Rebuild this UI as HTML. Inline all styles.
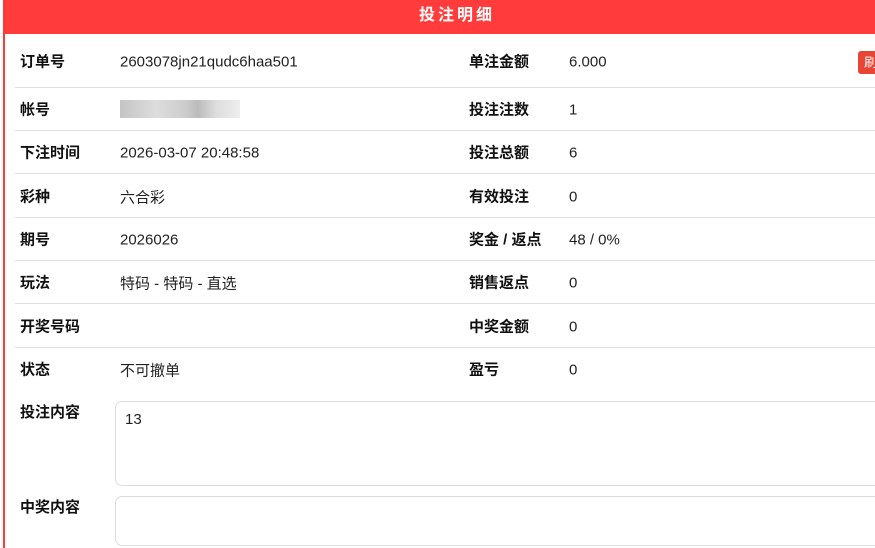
<!DOCTYPE html>
<html><head><meta charset="utf-8"><style>
html,body{margin:0;width:875px;height:548px;overflow:hidden}
body{background:#fff;font-family:"Liberation Sans","Noto Sans CJK SC",sans-serif;position:relative}
.dlg{position:absolute;left:3px;top:0;width:870px;height:548px;border-left:2px solid #ff3a3a;background:#fff}
.hd{position:absolute;left:0;top:0;width:870px;height:34px;background:#ff3b3b;color:#fff;font-weight:bold;font-size:16px;line-height:31px;text-indent:414px;letter-spacing:3px}
.row{position:absolute;left:15px;width:860px;height:43px;border-bottom:1px solid #e0e0e0;font-size:15px;color:#222;overflow:hidden}
.row span{position:absolute;top:50%;transform:translateY(-50%);white-space:nowrap}
.l{left:5px;font-weight:bold;color:#111}.v{left:105px;margin-top:1px}.l2{left:454px;font-weight:bold;color:#111}.v2{left:554px;margin-top:1px}
.ta{position:absolute;left:115px;width:800px;border:1px solid #ddd;border-radius:7px;font-size:15px;color:#222;box-sizing:border-box}
.lb{position:absolute;left:20px;font-weight:bold;font-size:15px;color:#111}
.btn{position:absolute;left:858px;top:51px;width:17px;height:23px;background:#e84535;border-radius:3px 0 0 3px;color:#fff;font-size:13px;line-height:23px;text-indent:6px;overflow:hidden}
.blur{position:absolute;left:120px;top:100px;width:120px;height:18px;background:linear-gradient(90deg,#c4c4c4,#ddd 30%,#ccc 55%,#bbb 65%,#ddd 80%,#eee)}
</style></head><body>
<div class="dlg">
<div class="hd">投注明细</div>
</div>
<div class="row" style="top:34px;height:53px"><span class="l">订单号</span><span class="v">2603078jn21qudc6haa501</span><span class="l2">单注金额</span><span class="v2">6.000</span></div>
<div class="row" style="top:87px"><span class="l">帐号</span><span class="l2">投注注数</span><span class="v2">1</span></div>
<div class="row" style="top:130px"><span class="l">下注时间</span><span class="v">2026-03-07 20:48:58</span><span class="l2">投注总额</span><span class="v2">6</span></div>
<div class="row" style="top:174px"><span class="l">彩种</span><span class="v">六合彩</span><span class="l2">有效投注</span><span class="v2">0</span></div>
<div class="row" style="top:217px"><span class="l">期号</span><span class="v">2026026</span><span class="l2">奖金 / 返点</span><span class="v2">48 / 0%</span></div>
<div class="row" style="top:260px"><span class="l">玩法</span><span class="v">特码 - 特码 - 直选</span><span class="l2">销售返点</span><span class="v2">0</span></div>
<div class="row" style="top:304px"><span class="l">开奖号码</span><span class="l2">中奖金额</span><span class="v2">0</span></div>
<div class="row" style="top:347px;border-bottom:none"><span class="l">状态</span><span class="v">不可撤单</span><span class="l2">盈亏</span><span class="v2">0</span></div>
<div class="blur"></div>
<div class="btn">刷</div>
<div class="lb" style="top:401px">投注内容</div>
<div class="ta" style="top:401px;height:85px"><div style="padding:9px 9px">13</div></div>
<div class="lb" style="top:496px">中奖内容</div>
<div class="ta" style="top:496px;height:50px"></div>
</body></html>
